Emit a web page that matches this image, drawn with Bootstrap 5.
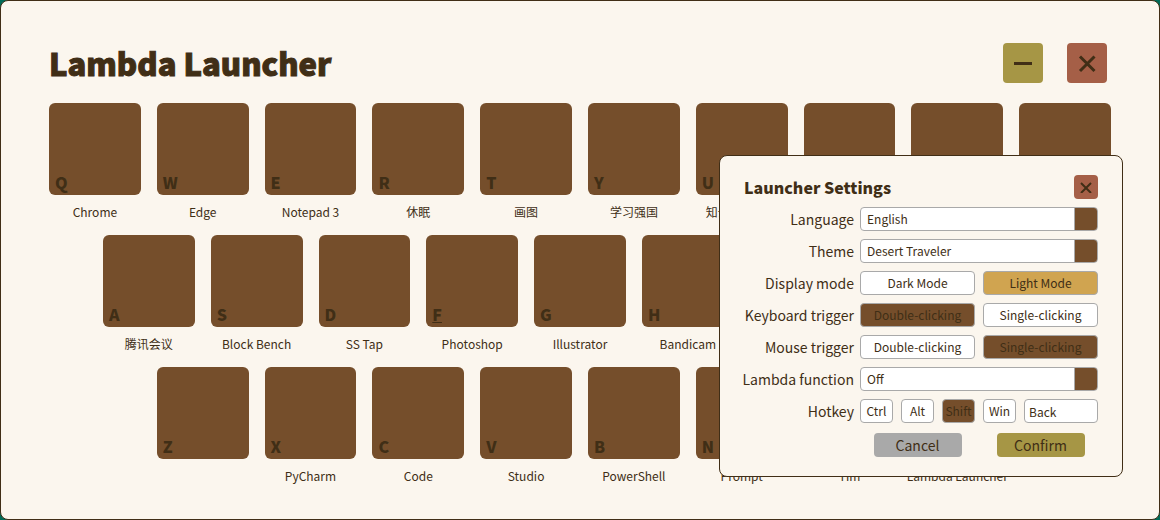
<!DOCTYPE html>
<html lang="en">
<head>
<meta charset="utf-8">
<meta name="viewport" content="width=device-width, initial-scale=1">
<title>Lambda Launcher</title>
<link href="https://cdn.jsdelivr.net/npm/bootstrap@5.3.0/dist/css/bootstrap.min.css" rel="stylesheet">
<style>
:root{--paper:#fbf6ee;--ink:#402e16;--wood:#754e2b;--olive:#a69645;--clay:#a55f47;--sand:#d0a450;--line:#a9a9a9}
body{background:#006b58;color:var(--ink);font-family:"Noto Sans CJK SC","Noto Sans",sans-serif;font-size:12px;line-height:16px}
.launcher{min-height:100vh;background:var(--paper);border:1px solid var(--ink);border-radius:8px;padding:42px 48px 32px}
.app-title{font-size:31px;line-height:40px;font-weight:900;-webkit-text-stroke:1px var(--ink);stroke-linejoin:round}
.sq{border:0;border-radius:4px;color:var(--ink);width:40px;height:40px;padding:0;display:flex;align-items:center;justify-content:center}
.sq-sm{width:24px;height:24px}
.bg-olive{background:var(--olive)}.bg-clay{background:var(--clay)}.bg-mute{background:var(--line)}
.keys{display:grid;grid-template-columns:repeat(20,minmax(0,1fr));column-gap:16px;row-gap:12px}
.key-item{grid-column-end:span 2;text-align:center;min-height:120px;white-space:nowrap}
.row-a{grid-column-start:2}.row-z{grid-column-start:3}
.key-tile{display:flex;align-items:flex-end;width:100%;height:92px;margin-bottom:9px;border:0;border-radius:6px;background:var(--wood);color:var(--ink);font-size:16px;line-height:24px;font-weight:900;padding:0 6px 1px}
.key-name{display:flex;justify-content:center}
.settings{position:absolute;top:155px;right:37px;width:404px;background:var(--paper);border:1px solid var(--ink);border-radius:8px;padding:19px 24px 19px 20px}
.settings h2{font-size:16px;line-height:24px;font-weight:900}
.form-line{display:grid;grid-template-columns:minmax(0,1fr) 238px;column-gap:6px;margin-top:8px}
.form-line>.cap{font-size:14px;line-height:24px;text-align:right;white-space:nowrap}
.field{height:24px;border:1px solid var(--line);border-radius:4px;background:#fff;color:var(--ink);font-size:12px;line-height:20px;padding:0;min-width:0}
select.field{appearance:none;width:100%;padding:0 28px 0 6px;background:linear-gradient(var(--wood),var(--wood)) right/22px 100% no-repeat,linear-gradient(var(--line),var(--line)) right 22px top/1px 100% no-repeat,#fff}
.field.on{background:var(--wood)}.field.lit{background:var(--sand)}
.halves{display:grid;grid-template-columns:1fr 1fr;column-gap:8px}
.hot{display:grid;grid-template-columns:repeat(4,33px) 1fr;column-gap:8px}
input.field{padding:0 4px}
.actions{grid-column:2;justify-items:center}
.form-line.last{margin-top:10px}
.act{width:88px;height:24px;border:0;border-radius:4px;color:var(--ink);font-size:14px;line-height:24px;padding:0}
</style>
</head>
<body>
<main class="launcher position-relative">
  <header class="d-flex align-items-center justify-content-between mb-3 pe-1 pb-1">
    <h1 class="app-title m-0">Lambda Launcher</h1>
    <div class="d-flex gap-4">
      <button class="sq bg-olive" aria-label="Minimize"><svg width="20" height="20" stroke="currentColor" stroke-width="3"><path d="M1 10.5h18"/></svg></button>
      <button class="sq bg-clay" aria-label="Close"><svg width="20" height="20" stroke="currentColor" stroke-width="3"><path d="M3 3.500l14.500 14.500M17.500 3.500L3 18"/></svg></button>
    </div>
  </header>
  <section class="keys" aria-label="Keys">
    <div class="key-item"><button class="key-tile">Q</button><span class="key-name">Chrome</span></div>
    <div class="key-item"><button class="key-tile">W</button><span class="key-name">Edge</span></div>
    <div class="key-item"><button class="key-tile">E</button><span class="key-name">Notepad 3</span></div>
    <div class="key-item"><button class="key-tile">R</button><span class="key-name" lang="zh">休眠</span></div>
    <div class="key-item"><button class="key-tile">T</button><span class="key-name" lang="zh">画图</span></div>
    <div class="key-item"><button class="key-tile">Y</button><span class="key-name" lang="zh">学习强国</span></div>
    <div class="key-item"><button class="key-tile">U</button><span class="key-name" lang="zh">知云文献翻译</span></div>
    <div class="key-item"><button class="key-tile" aria-label="I"></button></div>
    <div class="key-item"><button class="key-tile" aria-label="O"></button></div>
    <div class="key-item"><button class="key-tile" aria-label="P"></button></div>

    <div class="key-item row-a"><button class="key-tile">A</button><span class="key-name" lang="zh">腾讯会议</span></div>
    <div class="key-item"><button class="key-tile">S</button><span class="key-name">Block Bench</span></div>
    <div class="key-item"><button class="key-tile">D</button><span class="key-name">SS Tap</span></div>
    <div class="key-item"><button class="key-tile"><u>F</u></button><span class="key-name">Photoshop</span></div>
    <div class="key-item"><button class="key-tile">G</button><span class="key-name">Illustrator</span></div>
    <div class="key-item"><button class="key-tile">H</button><span class="key-name">Bandicam</span></div>

    <div class="key-item row-z"><button class="key-tile">Z</button></div>
    <div class="key-item"><button class="key-tile">X</button><span class="key-name">PyCharm</span></div>
    <div class="key-item"><button class="key-tile">C</button><span class="key-name">Code</span></div>
    <div class="key-item"><button class="key-tile">V</button><span class="key-name">Studio</span></div>
    <div class="key-item"><button class="key-tile">B</button><span class="key-name">PowerShell</span></div>
    <div class="key-item"><button class="key-tile">N</button><span class="key-name">Prompt</span></div>
    <div class="key-item"><button class="key-tile" aria-label="M"></button><span class="key-name">Tim</span></div>
    <div class="key-item"><button class="key-tile" aria-label="Comma"></button><span class="key-name">Lambda Launcher</span></div>
  </section>
</main>
<form class="settings" role="dialog" aria-labelledby="dlg-title">
  <div class="d-flex justify-content-between ps-1">
    <h2 class="m-0" id="dlg-title">Launcher Settings</h2>
    <button type="button" class="sq sq-sm bg-clay" aria-label="Close settings"><svg width="12" height="12" stroke="currentColor" stroke-width="2"><path d="M1 2l10 10M11 2L1 12"/></svg></button>
  </div>
  <div class="form-line"><label class="cap" for="lang">Language</label><select class="field" id="lang"><option>English</option></select></div>
  <div class="form-line"><label class="cap" for="theme">Theme</label><select class="field" id="theme"><option>Desert Traveler</option></select></div>
  <div class="form-line"><span class="cap" id="dm">Display mode</span><div class="halves" role="group" aria-labelledby="dm"><button type="button" class="field">Dark Mode</button><button type="button" class="field lit">Light Mode</button></div></div>
  <div class="form-line"><span class="cap" id="kt">Keyboard trigger</span><div class="halves" role="group" aria-labelledby="kt"><button type="button" class="field on">Double-clicking</button><button type="button" class="field">Single-clicking</button></div></div>
  <div class="form-line"><span class="cap" id="mt">Mouse trigger</span><div class="halves" role="group" aria-labelledby="mt"><button type="button" class="field">Double-clicking</button><button type="button" class="field on">Single-clicking</button></div></div>
  <div class="form-line"><label class="cap" for="fn">Lambda function</label><select class="field" id="fn"><option>Off</option></select></div>
  <div class="form-line"><label class="cap" for="hk">Hotkey</label><div class="hot"><button type="button" class="field">Ctrl</button><button type="button" class="field">Alt</button><button type="button" class="field on">Shift</button><button type="button" class="field">Win</button><input class="field" id="hk" type="text" value="Back"></div></div>
  <div class="form-line last"><div class="halves actions"><button type="button" class="act bg-mute">Cancel</button><button type="submit" class="act bg-olive">Confirm</button></div></div>
</form>
<script src="https://cdn.jsdelivr.net/npm/bootstrap@5.3.0/dist/js/bootstrap.bundle.min.js"></script>
</body>
</html>
